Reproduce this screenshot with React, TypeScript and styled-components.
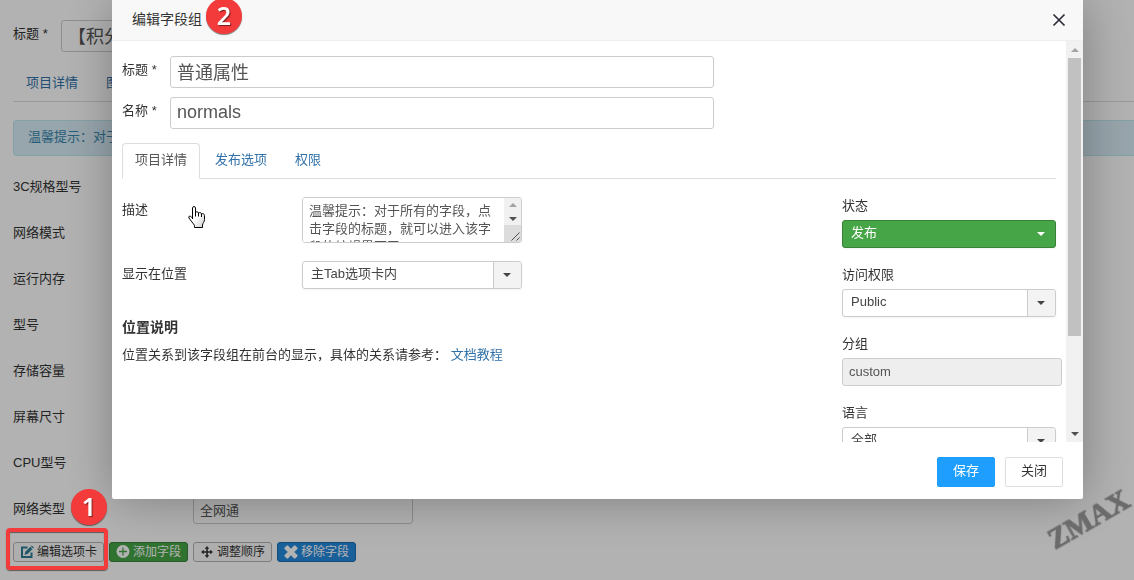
import React from "react";
import styled, { createGlobalStyle, css } from "styled-components";

const GlobalStyle = createGlobalStyle`
  *, *::before, *::after { box-sizing: border-box; }
  body {
    margin: 0;
    background: #fff;
    color: #333;
    font: 13px/18px "Liberation Sans", "Noto Sans CJK SC", sans-serif;
  }
  button, input, select, textarea { font: inherit; margin: 0; }
  a { color: #3071a9; text-decoration: none; }
`;

/* ---------- shared form parts ---------- */

const TitleRow = styled.div`
  display: flex;
  align-items: flex-start;
  margin-bottom: 9px;
`;

const TitleLabel = styled.label`
  width: 48px;
  flex: none;
  padding-top: 5px;
`;

const TitleInput = styled.input`
  width: 544px;
  height: 32px;
  padding: 2px 6px 4px;
  border: 1px solid #ccc;
  border-radius: 3px;
  background: #fff;
  color: #555;
  font-size: 18px;
`;

const TabBar = styled.nav`
  display: flex;
  gap: 2px;
  margin-top: 14px;
  margin-bottom: 18px;
  border-bottom: 1px solid #ddd;
`;

const Tab = styled.a<{ $active?: boolean }>`
  margin-bottom: -1px;
  padding: 7px 12px 9px;
  border: 1px solid transparent;
  border-radius: 4px 4px 0 0;
  ${(p) =>
    p.$active &&
    css`
      color: #555;
      background: #fff;
      border-color: #ddd #ddd #fff;
    `}
`;

const ControlRow = styled.div`
  display: flex;
  align-items: flex-start;
  margin-bottom: 18px;
`;

const ControlLabel = styled.label`
  width: 180px;
  flex: none;
  padding-top: 4px;
`;

const TextInput = styled.input`
  width: 220px;
  height: 28px;
  flex: none;
  padding: 2px 6px 4px;
  border: 1px solid #ccc;
  border-radius: 3px;
  background: #fff;
  color: #555;

  &:disabled {
    background: #eee;
  }
`;

/* ---------- page behind the dialog ---------- */

const Page = styled.main`
  min-height: 100vh;
  padding: 20px 0 18px 13px;
`;

const Alert = styled.div`
  margin-bottom: 18px;
  padding: 7px 14px 9px;
  border: 1px solid #bce8f1;
  border-right: 0;
  border-radius: 4px 0 0 4px;
  background: #d9edf7;
  color: #3a87ad;
`;

const Toolbar = styled.div`
  display: flex;
  gap: 5px;
`;

const tones = {
  plain: { bg: "#fafafa", edge: "#b3b3b3", text: "#333" },
  success: { bg: "#46a546", edge: "#378137", text: "#fff" },
  primary: { bg: "#2589dd", edge: "#1c6db2", text: "#fff" },
};

const SmallButton = styled.button<{ $tone: keyof typeof tones }>`
  display: flex;
  align-items: center;
  gap: 3px;
  height: 20px;
  padding: 0 6px;
  border: 1px solid ${(p) => tones[p.$tone].edge};
  border-radius: 3px;
  background: ${(p) => tones[p.$tone].bg};
  color: ${(p) => tones[p.$tone].text};
  font-size: 12px;
  line-height: 18px;
  white-space: nowrap;

  svg {
    width: 14px;
    height: 14px;
    flex: none;
  }
`;

/* ---------- dialog ---------- */

const Overlay = styled.div`
  position: fixed;
  inset: 0;
  display: flex;
  padding: 0 51px 81px 112px;
  background: rgba(0, 0, 0, 0.3);
`;

const Dialog = styled.section`
  display: flex;
  flex-direction: column;
  flex: 1;
  min-width: 0;
  border-radius: 0 0 2px 2px;
  background: #fff;
  box-shadow: 1px 1px 50px rgba(0, 0, 0, 0.3);
`;

const DialogHeader = styled.header`
  display: flex;
  align-items: center;
  justify-content: space-between;
  height: 41px;
  flex: none;
  padding: 0 17px 2px 20px;
  border-bottom: 1px solid #eee;
  background: #f8f8f8;
`;

const DialogTitle = styled.h1`
  margin: 0;
  font-size: 14px;
  font-weight: 400;
  line-height: 20px;
`;

const CloseButton = styled.button`
  display: flex;
  padding: 2px 0 0;
  border: 0;
  background: none;
  color: #2e2d3c;
`;

const DialogBody = styled.div`
  display: flex;
  flex: 1;
  min-height: 0;
`;

const ScrollPane = styled.div`
  flex: 1;
  min-width: 0;
  overflow: hidden;
  padding: 15px 10px;
`;

const ScrollTrack = styled.div`
  display: flex;
  flex-direction: column;
  align-items: center;
  width: 17px;
  flex: none;
  background: #f1f1f1;
`;

const ScrollThumb = styled.div`
  width: 13px;
  height: 72%;
  max-height: 278px;
  background: #c1c1c1;
`;

const ScrollArrow = styled.span<{ $dim?: boolean; $push?: boolean; $h: number }>`
  display: flex;
  align-items: center;
  justify-content: center;
  width: 17px;
  height: ${(p) => p.$h}px;
  flex: none;
  margin-top: ${(p) => (p.$push ? "auto" : "0")};
  color: ${(p) => (p.$dim ? "#a3a3a3" : "#505050")};
`;

const Columns = styled.div`
  display: flex;
  align-items: flex-start;
  justify-content: space-between;
`;

const MainColumn = styled.div`
  flex: 1;
  min-width: 0;
`;

const SideColumn = styled.aside`
  width: 214px;
  flex: none;
`;

const SideField = styled.div`
  display: flex;
  flex-direction: column;
  align-items: stretch;
  gap: 6px;
  margin-bottom: 18px;

  label {
    line-height: 17px;
  }
`;

const TextBox = styled.div`
  display: flex;
  width: 220px;
  height: 46px;
  border: 1px solid #ccc;
  border-radius: 3px;
  overflow: hidden;
`;

const TextArea = styled.textarea`
  flex: 1;
  min-width: 0;
  padding: 4px 6px;
  border: 0;
  background: #fff;
  color: #555;
  line-height: 18px;
  overflow: hidden;
  resize: none;
`;

const GripCorner = styled.span`
  display: flex;
  width: 17px;
  flex: 1;
  background: #dcdcdc;
  color: #505050;
`;

const Picker = styled.div<{ $green?: boolean; $wide?: boolean }>`
  display: grid;
  grid-template-columns: 1fr 28px;
  width: ${(p) => (p.$wide ? "220px" : "100%")};
  height: 28px;
  border: 1px solid ${(p) => (p.$green ? "#378137" : "#ccc")};
  border-radius: 3px;
  background: ${(p) => (p.$green ? "#46a546" : "#fff")};
  color: ${(p) => (p.$green ? "#fff" : "#444")};
  overflow: hidden;
  box-shadow: 0 1px 2px rgba(0, 0, 0, 0.05);

  select {
    grid-area: 1 / 1 / 2 / 3;
    width: 100%;
    padding: 0 36px 2px 8px;
    border: 0;
    background: none;
    color: inherit;
    appearance: none;
  }
`;

const PickerArrow = styled.span<{ $green?: boolean }>`
  grid-area: 1 / 2 / 2 / 3;
  display: flex;
  align-items: center;
  justify-content: center;
  padding: 0 1px 1px 0;
  border-left: 1px solid ${(p) => (p.$green ? "transparent" : "#ccc")};
  background: ${(p) => (p.$green ? "transparent" : "#f3f3f3")};
  pointer-events: none;
`;

const NoteTitle = styled.h2`
  margin: 28px 0 9px;
  font-size: 14px;
  line-height: 20px;
  font-weight: 700;
`;

const Note = styled.p`
  margin: 0;
`;

const DialogFooter = styled.footer`
  display: flex;
  justify-content: flex-end;
  gap: 10px;
  flex: none;
  padding: 15px 20px 12px;
`;

const FooterButton = styled.button<{ $primary?: boolean }>`
  width: 58px;
  height: 30px;
  padding: 0 0 2px;
  border: 1px solid ${(p) => (p.$primary ? "#1e9fff" : "#dedede")};
  border-radius: 2px;
  background: ${(p) => (p.$primary ? "#1e9fff" : "#fff")};
  color: ${(p) => (p.$primary ? "#fff" : "#333")};
`;

/* ---------- annotations laid over the page ---------- */

const Step = styled.span<{ $x: number; $y: number }>`
  position: absolute;
  left: ${(p) => p.$x}px;
  top: ${(p) => p.$y}px;
  width: 36px;
  height: 36px;
  border-radius: 50%;
  background: #f43b3b;
  box-shadow: 0 1px 1px rgba(0, 0, 0, 0.5);
  color: #fff;
  font: 600 25px/34px "Noto Sans", "Open Sans", sans-serif;
  text-align: center;
  text-shadow: 1px 1px 1px rgba(0, 0, 0, 0.5);
`;

const Highlight = styled.div`
  position: absolute;
  left: 6px;
  top: 528px;
  width: 102px;
  height: 42px;
  border: 4px solid #f43b3b;
  border-radius: 4px;
  box-shadow: 0 1px 1px rgba(0, 0, 0, 0.5), inset 0 1px 1px rgba(0, 0, 0, 0.5);
`;

const Hand = styled.svg`
  position: absolute;
  left: 188px;
  top: 206px;
`;

const Watermark = styled.span`
  position: absolute;
  right: 1px;
  bottom: 46px;
  color: #6b6b6b;
  font: 700 29px/30px "Liberation Serif", serif;
  -webkit-text-stroke: 1px #6b6b6b;
  transform: rotate(-30deg);
`;

/* ---------- small drawings ---------- */

const Caret = () => (
  <svg width="8" height="4" viewBox="0 0 8 4" aria-hidden="true">
    <path d="M0 0h8L4 4z" fill="currentColor" />
  </svg>
);

const CaretUp = () => (
  <svg width="8" height="4" viewBox="0 0 8 4" aria-hidden="true">
    <path d="M0 4h8L4 0z" fill="currentColor" />
  </svg>
);

const CrossIcon = () => (
  <svg width="14" height="14" viewBox="0 0 14 14" aria-hidden="true">
    <path d="M1.5 1.5l11 11M12.5 1.5l-11 11" stroke="currentColor" strokeWidth="1.7" fill="none" />
  </svg>
);

const EditIcon = () => (
  <svg viewBox="0 0 14 14" aria-hidden="true">
    <path d="M7.5 2.500H2V12H11.500V7.500" stroke="#2f7d96" strokeWidth="2" fill="none" />
    <path d="M4.500 9.800l.8-3L10.300 1.800l2.200 2.200-5 5z" fill="#2f7d96" />
    <path d="M10.900 1.200l.8-.8 2.200 2.200-.8.8z" fill="#2f7d96" />
  </svg>
);

const AddIcon = () => (
  <svg viewBox="0 0 14 14" aria-hidden="true">
    <circle cx="7" cy="6.500" r="6.500" fill="currentColor" />
    <path d="M7 2.500v8M3 6.500h8" stroke="#46a546" strokeWidth="1.300" />
  </svg>
);

const MoveIcon = () => (
  <svg viewBox="0 0 14 14" aria-hidden="true">
    <path d="M7 2v10M2 7h10" stroke="currentColor" strokeWidth="1.600" />
    <path d="M7 1l2.300 2.800H4.700zM7 13l2.300-2.800H4.700zM1 7l2.800-2.300v4.600zM13 7l-2.800-2.300v4.600z" fill="currentColor" />
  </svg>
);

const RemoveIcon = () => (
  <svg viewBox="0 0 14 14" aria-hidden="true">
    <path
      d="M.5 2.800L2.800.5H4L7 3.800 10 .5h1.200l2.300 2.300V4L10.200 7l3.300 3v1.200l-2.300 2.300H10L7 10.200 4 13.500H2.800L.5 11.200V10L3.800 7 .5 4z"
      fill="currentColor"
    />
  </svg>
);

const PointerHand = () => (
  <Hand width="18" height="23" viewBox="0 0 18 23" aria-hidden="true">
    <defs>
      <linearGradient id="palm" x1="0" y1="0" x2="1" y2="1">
        <stop offset="0.5" stopColor="#fff" />
        <stop offset="1" stopColor="#ccc" />
      </linearGradient>
    </defs>
    <path
      d="M4.500 1.800C4.500 .2 7.500 .2 7.500 1.800V6.300C8.300 5.400 10.200 5.700 10.500 7C11.300 6.200 13.200 6.500 13.500 7.800C14.500 7.200 16.500 7.800 16.500 9.500V13.500C16.500 16 14.800 17 14.500 19V21.500H6.500V19.500C5.500 17.500 2.500 14.500 1 12C0 10.300 2 9.500 3.200 10.700L4.500 12.200Z"
      fill="url(#palm)"
      stroke="#000"
      strokeLinejoin="round"
    />
    <path d="M4.500 11.500v1.500M7.500 6v4.500M10.500 7v3.500M13.500 8v3" stroke="#000" fill="none" />
  </Hand>
);

const Required = () => <span> *</span>;

type SelectProps = { id: string; value: string; green?: boolean; wide?: boolean };

const Select = ({ id, value, green, wide }: SelectProps) => (
  <Picker $green={green} $wide={wide}>
    <select id={id} defaultValue={value}>
      <option>{value}</option>
    </select>
    <PickerArrow $green={green}>
      <Caret />
    </PickerArrow>
  </Picker>
);

const fields = [
  { id: "spec", label: "3C规格型号" },
  { id: "network", label: "网络模式" },
  { id: "memory", label: "运行内存" },
  { id: "model", label: "型号" },
  { id: "storage", label: "存储容量" },
  { id: "screen", label: "屏幕尺寸" },
  { id: "cpu", label: "CPU型号" },
  { id: "nettype", label: "网络类型", value: "全网通" },
];

const ProductPage = () => (
  <Page>
    <TitleRow>
      <TitleLabel htmlFor="page-title">
        标题
        <Required />
      </TitleLabel>
      <TitleInput id="page-title" defaultValue="【积分" />
    </TitleRow>
    <TabBar>
      <Tab href="#details">项目详情</Tab>
      <Tab href="#images">图像</Tab>
    </TabBar>
    <Alert>温馨提示：对于</Alert>
    {fields.map((f) => (
      <ControlRow key={f.id}>
        <ControlLabel htmlFor={f.id}>{f.label}</ControlLabel>
        <TextInput id={f.id} defaultValue={f.value} />
      </ControlRow>
    ))}
    <Toolbar>
      <SmallButton type="button" $tone="plain">
        <EditIcon />
        编辑选项卡
      </SmallButton>
      <SmallButton type="button" $tone="success">
        <AddIcon />
        添加字段
      </SmallButton>
      <SmallButton type="button" $tone="plain">
        <MoveIcon />
        调整顺序
      </SmallButton>
      <SmallButton type="button" $tone="primary">
        <RemoveIcon />
        移除字段
      </SmallButton>
    </Toolbar>
  </Page>
);

const GroupDialog = () => (
  <Dialog role="dialog" aria-labelledby="dialog-title">
    <DialogHeader>
      <DialogTitle id="dialog-title">编辑字段组</DialogTitle>
      <CloseButton type="button" aria-label="关闭">
        <CrossIcon />
      </CloseButton>
    </DialogHeader>
    <DialogBody>
      <ScrollPane>
        <TitleRow>
          <TitleLabel htmlFor="group-title">
            标题
            <Required />
          </TitleLabel>
          <TitleInput id="group-title" defaultValue="普通属性" />
        </TitleRow>
        <TitleRow>
          <TitleLabel htmlFor="group-name">
            名称
            <Required />
          </TitleLabel>
          <TitleInput id="group-name" defaultValue="normals" />
        </TitleRow>
        <TabBar>
          <Tab href="#group-details" $active>
            项目详情
          </Tab>
          <Tab href="#publishing">发布选项</Tab>
          <Tab href="#permissions">权限</Tab>
        </TabBar>
        <Columns>
          <MainColumn>
            <ControlRow>
              <ControlLabel htmlFor="description">描述</ControlLabel>
              <TextBox>
                <TextArea
                  id="description"
                  defaultValue="温馨提示：对于所有的字段，点击字段的标题，就可以进入该字段的编辑界面了"
                />
                <ScrollTrack>
                  <ScrollArrow $dim $h={14}>
                    <CaretUp />
                  </ScrollArrow>
                  <ScrollArrow $h={13}>
                    <Caret />
                  </ScrollArrow>
                  <GripCorner>
                    <svg width="17" height="17" viewBox="0 0 17 17" aria-hidden="true">
                      <path d="M7.5 15.500l8-8M12.500 15.500l3-3" stroke="currentColor" fill="none" />
                    </svg>
                  </GripCorner>
                </ScrollTrack>
              </TextBox>
            </ControlRow>
            <ControlRow>
              <ControlLabel htmlFor="position">显示在位置</ControlLabel>
              <Select id="position" value="主Tab选项卡内" wide />
            </ControlRow>
            <NoteTitle>位置说明</NoteTitle>
            <Note>
              位置关系到该字段组在前台的显示，具体的关系请参考： <a href="#docs">文档教程</a>
            </Note>
          </MainColumn>
          <SideColumn>
            <SideField>
              <label htmlFor="state">状态</label>
              <Select id="state" value="发布" green />
            </SideField>
            <SideField>
              <label htmlFor="access">访问权限</label>
              <Select id="access" value="Public" />
            </SideField>
            <SideField>
              <label htmlFor="group">分组</label>
              <TextInput id="group" defaultValue="custom" disabled />
            </SideField>
            <SideField>
              <label htmlFor="language">语言</label>
              <Select id="language" value="全部" />
            </SideField>
          </SideColumn>
        </Columns>
      </ScrollPane>
      <ScrollTrack>
        <ScrollArrow $dim $h={17}>
          <CaretUp />
        </ScrollArrow>
        <ScrollThumb />
        <ScrollArrow $push $h={17}>
          <Caret />
        </ScrollArrow>
      </ScrollTrack>
    </DialogBody>
    <DialogFooter>
      <FooterButton type="button" $primary>
        保存
      </FooterButton>
      <FooterButton type="button">关闭</FooterButton>
    </DialogFooter>
  </Dialog>
);

export default function App() {
  return (
    <>
      <GlobalStyle />
      <ProductPage />
      <Overlay>
        <GroupDialog />
        <Highlight />
        <Step $x={71} $y={489}>
          1
        </Step>
        <Step $x={206} $y={-2}>
          2
        </Step>
        <PointerHand />
        <Watermark>ZMAX</Watermark>
      </Overlay>
    </>
  );
}
